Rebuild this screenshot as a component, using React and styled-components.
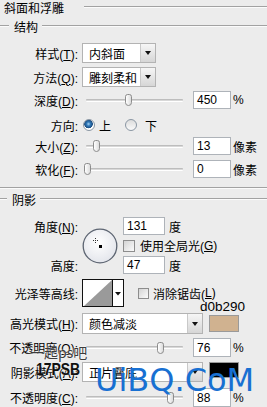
import React from "react";
import styled, { createGlobalStyle } from "styled-components";

const GlobalStyle = createGlobalStyle`
  html, body {
    margin: 0;
    padding: 0;
    background: #ececec;
  }
`;

const Panel = styled.div`
  position: relative;
  width: 267px;
  height: 407px;
  overflow: hidden;
  background: #ececec;
  color: #000;
  font: 12px "Liberation Sans", "Noto Sans CJK SC", sans-serif;
`;

const Rule = styled.div`
  flex: ${(p) => (p.$w ? "none" : "1")};
  width: ${(p) => (p.$w ? `${p.$w}px` : "auto")};
  height: 0;
  border-top: 1px solid #a2a2a2;
  border-bottom: 1px solid #fbfbfb;
`;

const Title = styled.div`
  display: flex;
  align-items: center;
  height: 14px;
  padding-left: 4px;
  gap: 20px;
`;

const GroupHeader = styled.div`
  display: flex;
  align-items: center;
  height: 14px;
  margin-top: ${(p) => p.$mt}px;

  span {
    margin: 0 4px 0 5px;
  }
`;

const Divider = styled(Rule)`
  margin-top: 9px;
`;

const Row = styled.div`
  display: flex;
  align-items: center;
  height: ${(p) => p.$h}px;
  margin-top: ${(p) => p.$mt}px;
`;

const Label = styled.span`
  flex: none;
  width: 78px;
  margin-right: 4px;
  text-align: right;
  white-space: nowrap;
`;

const Key = styled.span`
  text-decoration: underline;
`;

const Select = styled.div`
  display: flex;
  box-sizing: border-box;
  width: ${(p) => p.$w}px;
  height: 100%;
  background: #fff;
  border: 1px solid #b3b3b3;
`;

const SelectText = styled.span`
  flex: 1;
  display: flex;
  align-items: center;
  padding-left: 6px;
  white-space: nowrap;
  overflow: hidden;
`;

const SelectButton = styled.span`
  flex: none;
  width: 14px;
  display: flex;
  align-items: center;
  justify-content: center;
  border-left: 1px solid #c9c9c9;
  background: linear-gradient(#f6f6f6, #d6d6d6);

  &::after {
    content: "";
    border-left: 3.5px solid transparent;
    border-right: 3.5px solid transparent;
    border-top: 4px solid #111;
  }
`;

const Slider = styled.div`
  position: relative;
  flex: none;
  width: 97px;
  height: 100%;
  margin-left: 4px;
  display: flex;
  align-items: center;
`;

const Track = styled.div`
  width: 100%;
  height: 1px;
  border-top: 1px solid #bdbdbd;
  border-bottom: 1px solid #fff;
  border-radius: 1px;
  background: #d8d8d8;
`;

const Thumb = styled.div`
  position: absolute;
  top: 50%;
  width: 7px;
  height: 12px;
  margin: -6px 0 0 -4px;
  box-sizing: border-box;
  border: 1px solid #8c8c8c;
  border-radius: 3px 3px 4px 4px;
  background: linear-gradient(90deg, #fff, #dcdcdc);
`;

const NumInput = styled.div`
  flex: none;
  box-sizing: border-box;
  width: ${(p) => p.$w || 38}px;
  height: ${(p) => p.$h || 18}px;
  margin-left: ${(p) => p.$ml ?? 10}px;
  padding-left: 3px;
  display: flex;
  align-items: center;
  background: #fff;
  border: 1px solid #aeb3b9;
`;

const Unit = styled.span`
  margin-left: ${(p) => p.$ml ?? 2}px;
  white-space: nowrap;
`;

const RadioItem = styled.label`
  display: flex;
  align-items: center;
  gap: ${(p) => p.$gap}px;
  margin-left: ${(p) => p.$ml}px;
`;

const Radio = styled.span`
  box-sizing: border-box;
  width: 12px;
  height: 12px;
  border-radius: 50%;
  border: 1px solid #8a96a3;
  background: ${(p) =>
    p.$on
      ? "radial-gradient(circle at 45% 40%, #a9d2f2 0, #2f78b8 2px, #1d4f83 4px, #fff 4.6px)"
      : "linear-gradient(#dcdcdc, #fafafa)"};
`;

const Check = styled.span`
  flex: none;
  box-sizing: border-box;
  width: ${(p) => p.$s}px;
  height: ${(p) => p.$s}px;
  margin-left: ${(p) => p.$ml}px;
  margin-right: ${(p) => p.$mr}px;
  border: 1px solid #8d8d8d;
  background: linear-gradient(135deg, #d4d4d4, #fbfbfb);
`;

const AngleGrid = styled.div`
  display: grid;
  grid-template-columns: 78px 37px 1fr;
  grid-template-rows: 18px 21px 18px;
  column-gap: 4px;
  margin-top: 11px;
`;

const GridLabel = styled.span`
  grid-column: 1;
  grid-row: ${(p) => p.$row};
  justify-self: end;
  align-self: center;
  white-space: nowrap;
`;

const GridControl = styled.div`
  grid-column: 3;
  grid-row: ${(p) => p.$row};
  display: flex;
  align-items: center;
`;

const Dial = styled.div`
  grid-column: 2;
  grid-row: 1 / 4;
  align-self: center;
  display: flex;
`;

const Swatch = styled.div`
  flex: none;
  align-self: flex-start;
  width: 30px;
  height: ${(p) => p.$h}px;
  margin: ${(p) => p.$mt}px 0 0 6px;
  background: ${(p) => p.$color};
  border: 1px solid #9a9a9a;
  box-sizing: border-box;
`;

const HexNote = styled.div`
  position: absolute;
  left: 200px;
  top: 300px;
  font: 13.5px/1 "Liberation Sans", sans-serif;
`;

const MarkCn = styled.div`
  position: absolute;
  left: 30px;
  top: 345px;
  font: 14px/1 "Noto Sans CJK SC", sans-serif;
  color: #3c3c3c;
  text-shadow: 0 0 2px #fff, 0 0 1px #fff;
`;

const MarkLogo = styled.div`
  position: absolute;
  left: 36px;
  top: 361px;
  font: bold 17px/1 "Liberation Sans", sans-serif;
  color: #111;
  transform: scaleX(0.82);
  transform-origin: left top;
  text-shadow: 0 0 2px #eee;
`;

const MarkSite = styled.div`
  position: absolute;
  left: 95px;
  top: 364px;
  font: 32px/1 "DejaVu Sans", sans-serif;
  color: #1870d2;
`;

const DialIcon = () => (
  <svg width="36" height="36" viewBox="0 0 36 36">
    <defs>
      <radialGradient id="dialFill" cx="45%" cy="40%" r="60%">
        <stop offset="0" stopColor="#ffffff" />
        <stop offset="1" stopColor="#e4e6ec" />
      </radialGradient>
    </defs>
    <circle cx="18" cy="18" r="16.8" fill="url(#dialFill)" stroke="#5d6572" strokeWidth="1.3" />
    <g fill="#333">
      <rect x="13" y="10" width="1" height="1" />
      <rect x="13" y="14" width="1" height="1" />
      <rect x="11" y="12" width="1" height="1" />
      <rect x="15" y="12" width="1" height="1" />
      <rect x="13" y="12" width="1" height="1" />
    </g>
    <rect x="17" y="17" width="3" height="3" fill="#000" />
  </svg>
);

const ContourIcon = () => (
  <svg width="42" height="28" viewBox="0 0 42 28">
    <rect x="0.5" y="0.5" width="41" height="27" fill="#fff" stroke="#111" />
    <polygon points="2,27 30,1 30,27" fill="#9a9a9a" />
    <line x1="30.5" y1="0" x2="30.5" y2="28" stroke="#111" />
    <polygon points="33,13 39,13 36,16.5" fill="#111" />
  </svg>
);

const SliderRow = ({ label, pos, value, unit, mt, h = 18 }) => (
  <Row $mt={mt} $h={h}>
    <Label>{label}</Label>
    <Slider>
      <Track />
      <Thumb style={{ left: `${pos * 100}%` }} />
    </Slider>
    <NumInput $h={h}>{value}</NumInput>
    <Unit>{unit}</Unit>
  </Row>
);

export default function App() {
  return (
    <>
      <GlobalStyle />
      <Panel>
        <Title>
          斜面和浮雕
          <Rule />
        </Title>

        <GroupHeader $mt={5}>
          <Rule $w={9} />
          <span>结构</span>
          <Rule />
        </GroupHeader>

        <Row $mt={10} $h={20}>
          <Label>
            样式(<Key>T</Key>):
          </Label>
          <Select $w={74}>
            <SelectText>内斜面</SelectText>
            <SelectButton />
          </Select>
        </Row>

        <Row $mt={4} $h={20}>
          <Label>
            方法(<Key>Q</Key>):
          </Label>
          <Select $w={74}>
            <SelectText>雕刻柔和</SelectText>
            <SelectButton />
          </Select>
        </Row>

        <SliderRow
          mt={4}
          label={<>深度(<Key>D</Key>):</>}
          pos={0.44}
          value="450"
          unit="%"
        />

        <Row $mt={7} $h={18}>
          <Label>方向:</Label>
          <RadioItem $gap={4} $ml={1}>
            <Radio $on />
            上
          </RadioItem>
          <RadioItem $gap={8} $ml={14}>
            <Radio />
            下
          </RadioItem>
        </Row>

        <SliderRow
          mt={3}
          label={<>大小(<Key>Z</Key>):</>}
          pos={0.11}
          value="13"
          unit="像素"
        />

        <SliderRow
          mt={5}
          label={<>软化(<Key>F</Key>):</>}
          pos={0.02}
          value="0"
          unit="像素"
        />

        <Divider />

        <GroupHeader $mt={3}>
          <Rule $w={7} />
          <span>阴影</span>
          <Rule />
        </GroupHeader>

        <AngleGrid>
          <GridLabel $row={1}>
            角度(<Key>N</Key>):
          </GridLabel>
          <Dial>
            <DialIcon />
          </Dial>
          <GridControl $row={1}>
            <NumInput $w={42} $ml={0}>
              131
            </NumInput>
            <Unit $ml={4}>度</Unit>
          </GridControl>
          <GridControl $row={2}>
            <Check $s={12} $ml={0} $mr={5} />
            使用全局光(<Key>G</Key>)
          </GridControl>
          <GridLabel $row={3}>高度:</GridLabel>
          <GridControl $row={3}>
            <NumInput $w={42} $ml={0}>
              47
            </NumInput>
            <Unit $ml={4}>度</Unit>
          </GridControl>
        </AngleGrid>

        <Row $mt={5} $h={28}>
          <Label>光泽等高线:</Label>
          <ContourIcon />
          <Check $s={11} $ml={14} $mr={4} />
          消除锯齿(<Key>L</Key>)
        </Row>

        <Row $mt={6} $h={21}>
          <Label>
            高光模式(<Key>H</Key>):
          </Label>
          <Select $w={121}>
            <SelectText>颜色减淡</SelectText>
            <SelectButton />
          </Select>
          <Swatch $color="#d0b290" $h={17} $mt={2} />
        </Row>

        <SliderRow
          mt={4}
          h={19}
          label={<>不透明度(<Key>O</Key>):</>}
          pos={0.77}
          value="76"
          unit="%"
        />

        <Row $mt={5} $h={20}>
          <Label>
            阴影模式(<Key>A</Key>):
          </Label>
          <Select $w={121}>
            <SelectText>正片叠底</SelectText>
            <SelectButton />
          </Select>
          <Swatch $color="#000" $h={16} $mt={0} />
        </Row>

        <SliderRow
          mt={6}
          h={19}
          label={<>不透明度(<Key>C</Key>):</>}
          pos={0.88}
          value="88"
          unit="%"
        />

        <HexNote>d0b290</HexNote>
        <MarkCn>一起ps吧</MarkCn>
        <MarkLogo>17PSB</MarkLogo>
        <MarkSite>UiBQ.CoM</MarkSite>
      </Panel>
    </>
  );
}
